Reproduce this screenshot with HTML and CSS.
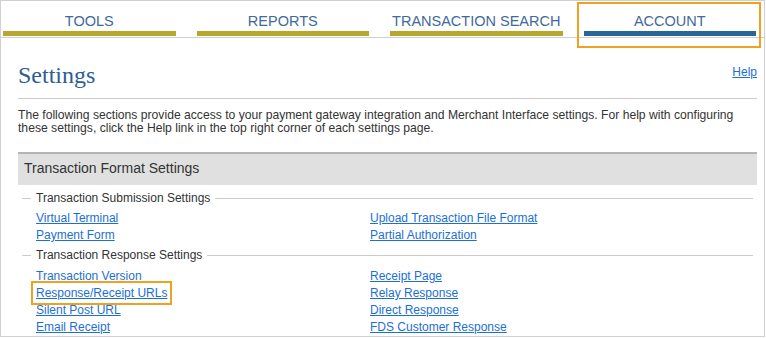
FILE: index.html
```html
<!DOCTYPE html>
<html lang="en">
<head>
<meta charset="utf-8">
<title>Settings</title>
<link rel="stylesheet" href="styles.css">
</head>
<body>
<div class="frame">
  <nav class="tabs">
    <a class="tab">TOOLS</a>
    <a class="tab">REPORTS</a>
    <a class="tab">TRANSACTION SEARCH</a>
    <a class="tab tab-active">ACCOUNT</a>
  </nav>
  <main class="content">
    <div class="page-head">
      <h1 class="title">Settings</h1>
      <a class="help" href="#">Help</a>
    </div>
    <p class="intro">The following sections provide access to your payment gateway integration and Merchant Interface settings. For help with configuring these settings, click the Help link in the top right corner of each settings page.</p>
    <section class="section">
      <h2 class="section-head">Transaction Format Settings</h2>
      <div class="group">
        <div class="legend">Transaction Submission Settings</div>
        <div class="links">
          <a href="#">Virtual Terminal</a>
          <a href="#">Upload Transaction File Format</a>
          <a href="#">Payment Form</a>
          <a href="#">Partial Authorization</a>
        </div>
      </div>
      <div class="group">
        <div class="legend">Transaction Response Settings</div>
        <div class="links">
          <a href="#">Transaction Version</a>
          <a href="#">Receipt Page</a>
          <a href="#" class="highlight">Response/Receipt URLs</a>
          <a href="#">Relay Response</a>
          <a href="#">Silent Post URL</a>
          <a href="#">Direct Response</a>
          <a href="#">Email Receipt</a>
          <a href="#">FDS Customer Response</a>
        </div>
      </div>
    </section>
  </main>
</div>
</body>
</html>
```

FILE: styles.css
```css
* { box-sizing: border-box; }
html, body { margin: 0; padding: 0; background: #fff; }
body { font-family: "Liberation Sans", Arial, sans-serif; }

.frame {
  width: 765px;
  height: 337px;
  border: 1px solid #d0d0d0;
  overflow: hidden;
}

.tabs {
  display: grid;
  grid-template-columns: repeat(4, 172.5px);
  column-gap: 21px;
  padding-left: 2px;
  height: 37px;
  border-bottom: 1px solid #cfcfcf;
}
.tab {
  position: relative;
  display: flex;
  flex-direction: column;
  align-items: center;
  padding-top: 12px;
  font-size: 14.5px;
  line-height: 16px;
  color: #41699c;
  text-decoration: none;
}
.tab::after {
  content: "";
  display: block;
  align-self: stretch;
  height: 5px;
  margin-top: 2px;
  background: #b6a82d;
}
.tab-active::after { background: #2a6598; }
.tab-active::before {
  content: "";
  position: absolute;
  left: -7px;
  right: -5px;
  top: 1px;
  height: 42px;
  border: 2px solid #f0a11f;
}

.content {
  padding: 0 7px 0 17px;
}

.page-head {
  display: flex;
  justify-content: space-between;
  align-items: flex-start;
  padding-top: 23px;
  padding-bottom: 9px;
  border-bottom: 1px solid #cccccc;
}
.title {
  margin: 0;
  font-family: "Liberation Serif", "Times New Roman", serif;
  font-weight: normal;
  font-size: 24px;
  line-height: 28px;
  color: #2c5d95;
}
.help {
  margin-top: 4px;
  font-size: 12px;
  line-height: 14px;
  color: #1b6fd6;
}

.intro {
  margin: 10px 0 0;
  font-size: 12.15px;
  line-height: 13px;
  color: #333;
}

.section { margin-top: 17px; }
.section-head {
  margin: 0;
  border-top: 2px solid #b5b5b5;
  background: #e0e0e0;
  padding: 6px 6px 9px;
  font-size: 14px;
  line-height: 16px;
  font-weight: normal;
  color: #333;
}

.group { margin-top: 6px; }
.group + .group { margin-top: 4px; }
.legend {
  display: flex;
  align-items: center;
  gap: 5px;
  margin: 0 4px 0 4px;
  font-size: 12px;
  line-height: 14px;
  color: #333;
}
.legend::before {
  content: "";
  width: 9px;
  border-top: 1px solid #cccccc;
}
.legend::after {
  content: "";
  flex: 1;
  border-top: 1px solid #cccccc;
}

.links {
  display: grid;
  grid-template-columns: 334px 1fr;
  padding-left: 18px;
  margin-top: 5px;
  font-size: 12px;
  line-height: 17px;
}
.group + .group .links { margin-top: 6px; }
.links a {
  color: #1b6fd6;
  justify-self: start;
}
.highlight { position: relative; }
.highlight::after {
  content: "";
  position: absolute;
  left: -5px;
  right: -5px;
  top: -4px;
  bottom: -3px;
  border: 2px solid #f0a11f;
}
```
